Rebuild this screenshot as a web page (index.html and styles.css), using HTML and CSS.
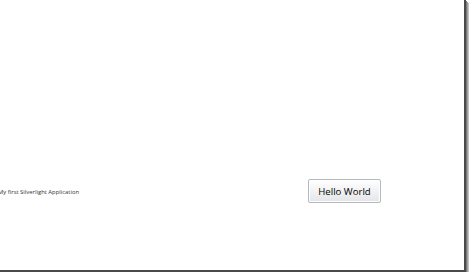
FILE: index.html
```html
<!DOCTYPE html>
<html>
<head>
<meta charset="utf-8">
<link rel="stylesheet" href="styles.css">
</head>
<body>
<div class="frame">
  <div class="row">
    <span class="label">My first Silverlight Application</span>
    <button class="btn">Hello World</button>
  </div>
</div>
</body>
</html>
```
FILE: styles.css
```css
html, body {
  margin: 0;
  padding: 0;
  background: #ffffff;
}
.frame {
  width: 466px;
  height: 272px;
  box-sizing: border-box;
  background: #ffffff;
  border-right: 2px solid #4a4a4a;
  border-bottom: 2px solid #4a4a4a;
  box-shadow: 1px 1px 0 #7a7a7a, 2px 2px 0 #a0a0a0, 3px 3px 1px #c4c4c4;
  padding-top: 179px;
  overflow: hidden;
}
.row {
  display: grid;
  grid-template-columns: 308px 73px;
  align-items: center;
  height: 24px;
}
.label {
  margin-left: -2px;
  font-family: "Open Sans", "DejaVu Sans", sans-serif;
  font-size: 5.9px;
  color: #333;
  white-space: nowrap;
  padding-top: 1px;
}
.btn {
  width: 73px;
  height: 24px;
  margin: 0;
  padding: 0;
  box-sizing: border-box;
  border: 1px solid #b4b8bc;
  border-radius: 2px;
  background: linear-gradient(#fefefe 0%, #f3f4f5 45%, #e3e5e8 100%);
  font-family: "Open Sans", "DejaVu Sans", sans-serif;
  font-size: 9.6px;
  font-weight: 500;
  color: #000;
  box-shadow: inset 0 0 0 1px #ffffff;
}
```
